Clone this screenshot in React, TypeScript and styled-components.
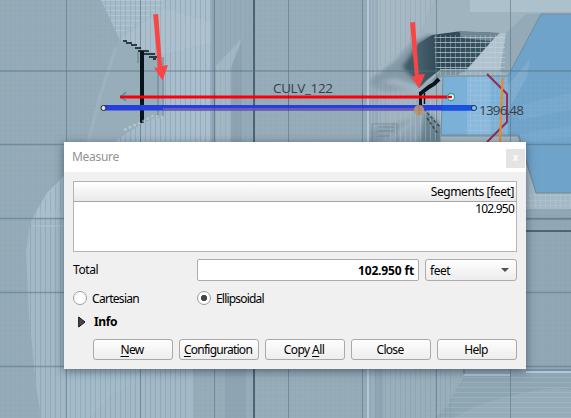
import React from "react";
import styled, { createGlobalStyle } from "styled-components";

const GlobalStyle = createGlobalStyle`
  *, *::before, *::after { box-sizing: border-box; }
  body { margin: 0; overflow: hidden; }
`;

const uiFont = `"Noto Sans", "Open Sans", sans-serif`;

const Screen = styled.main`
  position: relative;
  width: 571px;
  height: 418px;
  overflow: hidden;
  background: #93a9b7;
`;

const MapCanvas = styled.svg`
  display: block;
  width: 571px;
  height: 418px;
`;

const MapLabel = styled.text`
  font-family: "Open Sans", sans-serif;
  font-size: 13.5px;
  fill: #363f47;
`;

const Dialog = styled.section`
  position: absolute;
  left: 64px;
  top: 142px;
  width: 462px;
  height: 227px;
  background: #f0f0f0;
  box-shadow: 0 2px 9px rgba(20, 35, 50, 0.55);
  font-family: ${uiFont};
  font-size: 12px;
  line-height: 16px;
  color: #000;
`;

const TitleBar = styled.header`
  display: flex;
  justify-content: space-between;
  height: 30px;
  padding: 7px 1px 0 8px;
  background: #fff;
  color: #929292;
`;

const CloseButton = styled.button`
  width: 19px;
  height: 19px;
  padding: 0 0 3px;
  border: 0;
  background: #e4e4e4;
  color: #fafafa;
  font: bold 10px/16px ${uiFont};
`;

const Content = styled.div`
  display: flex;
  flex-direction: column;
  padding: 9px 9px 0;
`;

const Table = styled.div`
  height: 71px;
  border: 1px solid #b4b4b4;
  background: #fff;
  text-align: right;
`;

const HeaderCell = styled.div`
  height: 20px;
  padding: 2px 2px 0 0;
  border-bottom: 1px solid #a6a6a6;
  background: linear-gradient(#fff, #e9e9e9);
`;

const ValueCell = styled.div`
  height: 15px;
  padding-right: 2px;
  line-height: 14px;
`;

const Tracked = styled.span<{ $s?: number }>`
  letter-spacing: ${(p) => p.$s ?? -0.4}px;
  white-space: nowrap;
`;

const TotalRow = styled.div`
  display: grid;
  grid-template-columns: 118px 222px 92px;
  column-gap: 6px;
  height: 22px;
  margin-top: 7px;
  align-items: center;
`;

const TotalField = styled.div`
  height: 22px;
  padding: 3px 4px 0 0;
  border: 1px solid #acacac;
  border-radius: 2px;
  background: #fff;
  font-weight: 700;
  text-align: right;
`;

const UnitSelect = styled.div`
  display: flex;
  justify-content: space-between;
  height: 22px;
  padding: 3px 7px 0 4px;
  border: 1px solid #acacac;
  border-radius: 3px;
  background: linear-gradient(#fefefe, #ededed);
`;

const SelectArrow = styled.svg`
  width: 8px;
  height: 14px;
`;

const RadioRow = styled.div`
  display: grid;
  grid-template-columns: 124px 1fr;
  height: 16px;
  margin-top: 10px;
`;

const RadioOption = styled.label`
  display: flex;
  align-items: center;
  gap: 5px;
`;

const RadioMark = styled.span<{ $checked?: boolean }>`
  width: 14px;
  height: 14px;
  margin-top: -2px;
  border: 1px solid #9d9d9d;
  border-radius: 50%;
  background: ${(p) =>
    p.$checked ? "radial-gradient(circle, #454545 2.8px, #fff 3.5px)" : "#fff"};
`;

const InfoRow = styled.div`
  display: flex;
  align-items: center;
  gap: 8px;
  height: 16px;
  margin-top: 7px;
  padding-left: 5px;
  font-weight: 700;
`;

const ButtonRow = styled.div`
  display: flex;
  justify-content: flex-end;
  gap: 6px;
  margin-top: 9px;
`;

const PushButton = styled.button`
  width: 80px;
  height: 21px;
  padding: 1px 2px 0 0;
  border: 1px solid #a9a9a9;
  border-radius: 3px;
  background: linear-gradient(#fefefe, #ededed);
  color: #000;
  font: 12px/16px ${uiFont};
`;

const Accel = styled.span`
  text-decoration: underline;
  text-underline-offset: 2px;
  text-decoration-skip-ink: none;
`;

const verticals = [66.5, 140.5, 214.5, 288.5, 362.5, 436.5, 510.5];
const horizontals = [71, 144.5, 218.5, 292.5, 366.5];

function TerrainMap() {
  return (
    <MapCanvas viewBox="0 0 571 418">
      <defs>
        <pattern id="fineColumns" width="5" height="5" patternUnits="userSpaceOnUse">
          <path d="M.5 0V5" stroke="#6d8799" strokeOpacity=".5" />
        </pattern>
        <pattern id="lightColumns" width="5" height="5" patternUnits="userSpaceOnUse">
          <path d="M.5 0V5" stroke="#bccfdb" strokeOpacity=".6" />
        </pattern>
        <pattern id="fineRows" width="5" height="5" patternUnits="userSpaceOnUse">
          <path d="M0 2.5H5" stroke="#c2d2dc" strokeOpacity=".7" />
        </pattern>
        <pattern id="mesh" width="5" height="5" patternUnits="userSpaceOnUse">
          <path d="M0 .5H5M.5 0V5" stroke="#c0d3df" strokeOpacity=".5" />
        </pattern>
        <pattern id="faintMesh" width="5" height="5" patternUnits="userSpaceOnUse">
          <path d="M0 .5H5M.5 0V5" stroke="#6d8999" strokeOpacity=".08" />
        </pattern>
        <linearGradient id="plain" x1="0" x2="1">
          <stop offset="0" stopColor="#95abb9" />
          <stop offset=".5" stopColor="#98adba" />
          <stop offset="1" stopColor="#91a7b5" />
        </linearGradient>
        <linearGradient id="bank" x1="0" x2="1">
          <stop offset="0" stopColor="#a5bac8" />
          <stop offset="1" stopColor="#abc0ce" />
        </linearGradient>
        <linearGradient id="pit" x1="0" x2="1">
          <stop offset="0" stopColor="#4c6572" />
          <stop offset=".3" stopColor="#2f4855" />
          <stop offset="1" stopColor="#3e5866" />
        </linearGradient>
        <filter id="soft" x="-20%" y="-20%" width="140%" height="140%">
          <feGaussianBlur stdDeviation="2" />
        </filter>
        <filter id="edge" x="-20%" y="-20%" width="140%" height="140%">
          <feGaussianBlur stdDeviation=".6" />
        </filter>
      </defs>

      <rect width="571" height="418" fill="url(#plain)" />
      <rect width="571" height="418" fill="url(#faintMesh)" />

      <path d="M101 0L120 40L141 50L161 55V115L141 124L112 143H212V0Z" fill="url(#bank)" />
      <path d="M101 0L120 40L141 50L161 55V115L141 124L112 143H212V0Z" fill="url(#fineColumns)" opacity=".7" />
      <path d="M101 0L118 36L163 7V0Z" fill="url(#mesh)" />
      <path d="M101 0L118 36L163 7V0Z" fill="url(#fineColumns)" opacity=".6" />
      <path d="M120 40L163 8L212 23V42L161 55Z" fill="#b6c9d5" opacity=".25" />
      <path d="M119 40L141 50L161 55V114L141 122L112 143H88L105 77Z" fill="#98adba" />
      <path d="M116 47L99 99L88 143" stroke="#a9bcc8" strokeWidth="3" opacity=".4" fill="none" />
      <path d="M212 0H254V143H212Z" fill="#96abb9" />
      <path d="M216 66L242 38L232 64L231 143H216Z" fill="#a5bac7" opacity=".75" />
      <path d="M231 68L242 42V143H231Z" fill="#879eac" opacity=".6" />
      <rect x="216" width="38" height="143" fill="url(#fineColumns)" opacity=".3" />
      <rect x="211" width="4" height="143" fill="#8299a8" opacity=".5" />

      <path d="M64 176L46 194L36 211L30 224L26 252L29 315L36 385L41 418H193V369H64Z" fill="#a3b9c8" />
      <path d="M64 176L46 194L36 211L30 224L26 252L29 315L36 385L41 418H190V369H64Z" fill="url(#fineColumns)" opacity=".7" />
      <path d="M64 176L46 194L34 218H64Z" fill="#b1c7d5" opacity=".45" />
      <path d="M64 176L37 211H64Z" fill="url(#fineColumns)" opacity=".4" />
      <path d="M32 226H64" stroke="#b0c4d1" strokeWidth="2" opacity=".5" />
      <path d="M64 369H165L113 394L89 418H64Z" fill="#b1c7d5" opacity=".15" />
      <rect x="225" y="369" width="21" height="49" fill="#849baa" opacity=".45" />

      <g>
        <rect x="368" width="66" height="144" fill="#a1b3bf" />
        <path d="M424 0H571V14H541L524 54L508 76H443V143H390L411 92L395 72Z" fill="#a0b4c0" />
        <rect x="470" width="101" height="12" fill="#adc1cd" />
        <path d="M371 0H434L412 50L371 78Z" fill="#a5b8c4" />
        <path d="M370 0V143H458L437 125L419 105L371 71L412 50L436 0Z" fill="url(#fineColumns)" opacity=".4" />
        <path d="M369 0V143M373 0V143M377 0V143" stroke="#7890a0" opacity=".6" />
        <g filter="url(#soft)">
          <path d="M368 83L398 58L412 42L430 34V72L414 84L396 78Z" fill="#718895" opacity=".6" />
          <path d="M402 67L418 44L432 35V70L420 86L411 76Z" fill="#3a535f" opacity=".9" />
          <path d="M388 83L417 95L414 124L386 143H420V98Z" fill="#8fa4b0" />
          <path d="M425 109L443 127L446 143H419Z" fill="#56717e" opacity=".75" />
          <path d="M376 79L408 90L384 92L370 86Z" fill="#768d99" opacity=".45" />
          <path d="M370 130Q400 122 416 117L384 143H370Z" fill="#6e8592" opacity=".4" />
        </g>
        <g filter="url(#edge)">
          <path d="M418 44L432 35L458 31.5L499 33L490 43L467 69L441 69L427 80L419 88L414 72Z" fill="url(#pit)" />
          <path d="M459 31L500 33L491 41L462 38Z" fill="#708793" />
          <path d="M441 70H466L458 75H445L431 82L422 91Z" fill="#8096a2" />
          <path d="M500 33H506L500 72H466L491 42Z" fill="#b1c4cf" opacity=".85" />
          <path d="M506 33L526 14H541L508 75L500 72Z" fill="#91a7b4" opacity=".8" />
        </g>
        <path d="M434 35H505V72H436Z" fill="url(#fineRows)" />
        <path d="M390 100H441V144H384ZM434 35H505V76H436Z" fill="url(#lightColumns)" opacity=".65" />
        <path d="M372 124H397V144H372ZM378 127H394M378 131H394M378 136H390" fill="none" stroke="#506b7a" strokeOpacity=".4" />
      </g>

      <path d="M541 14L508 76L506 136H518L536 193H571V14Z" fill="#6fa3c9" />
      <path d="M443 76H508V136H441Z" fill="#7bb0d7" />
      <path d="M467 76H490V136H467Z" fill="#91bee0" opacity=".7" />
      <path d="M508 108L571 93V110L520 120ZM508 136L571 126V137L508 144Z" fill="#91bbda" opacity=".22" />
      <path d="M507 86L530 59L527 77L507 112Z" fill="#9fc5df" opacity=".3" />
      <rect x="467" y="76" width="40" height="60" fill="url(#mesh)" opacity=".35" />
      <rect x="508" y="76" width="63" height="66" fill="url(#mesh)" opacity=".12" />
      <path d="M571 14H541L508 76H443L441 135H519L536 193H571" fill="none" stroke="#708c9d" />
      <path d="M441 136H518L521 143H441Z" fill="#a5b8c4" />
      <path d="M520 142L536 193H571V209H526V142Z" fill="#a4b8c5" />
      <path d="M441 136H518L536 193H571" fill="none" stroke="#748d9b" />
      <path d="M526 194H571V209H526Z" fill="url(#mesh)" opacity=".5" />

      <path d="M464 370V418H438L449 403Z" fill="#9cafb9" />
      <path d="M464 376H571V418H437L450 400Z" fill="#8ea5b2" />
      <path d="M464 376H571V418H437L450 400Z" fill="url(#fineRows)" opacity=".35" />
      <path d="M454 418Q485 397 555 388L571 390V418Z" fill="#a8bdca" opacity=".3" />
      <path d="M371 369H463L449 404L436 418H371Z" fill="#a1b6c3" opacity=".4" />
      <rect x="371" y="369" width="80" height="49" fill="url(#fineColumns)" opacity=".4" />
      <path d="M379 369V418" stroke="#778f9f" strokeWidth="8" opacity=".25" />

      <path d="M254 0V418M526 231H571" stroke="#4c6575" strokeWidth="2" />
      <path d="M368 0V418M464 375H510M526 372H571" stroke="#b0c8d7" strokeWidth="2" />
      <path d="M526 219H571M526 370H571M464 369V374" stroke="#607c8b" />
      {verticals.map((x) => (
        <path key={x} d={`M${x} 0V418`} stroke="#526f81" strokeOpacity=".55" />
      ))}
      {horizontals.map((y) => (
        <path key={y} d={`M0 ${y}H571`} stroke="#526f81" strokeWidth="1.3" strokeOpacity=".5" />
      ))}

      <g fill="none" stroke="#06151d">
        <path d="M142 51V123" strokeWidth="4" />
        <path d="M123 41H127M126 43H132M131 45H137M135 48H141M138 51H149M143 54H155M149 57H157M153 59H156" strokeWidth="1.6" />
        <path d="M138 52V63" stroke="#627c8b" />
        <path d="M158 57V118M163 57V118" stroke="#738b99" strokeWidth="1.3" />
        <path d="M160.5 57V118" stroke="#9cacb7" strokeWidth="3" opacity=".8" />
        <path d="M420.5 92V111" strokeWidth="3" />
        <path d="M424.5 93V104" strokeWidth="1.5" />
        <path d="M420 94L425 90L429 87L434 84L439 79" strokeWidth="4" />
        <path d="M424 109L430 116L440 127M427 118L438 134" strokeWidth="1.5" strokeDasharray="3 2" opacity=".55" />
        <path d="M124 130L142 122L153 116L164 117" stroke="#c6d3d9" strokeWidth="2.5" strokeDasharray="3 2" opacity=".6" />
      </g>

      <path d="M104 107.8H474" stroke="#263fde" strokeWidth="5.5" />
      <path d="M163 109.3H419" stroke="#735fb0" strokeWidth="2.5" opacity=".9" />
      <path d="M442 108H474" stroke="#1752e2" strokeWidth="5" />
      <path d="M126 92L121 97L126 101" fill="none" stroke="#21a5a3" strokeWidth="1.5" />
      <path d="M120 97H450" stroke="#fb0009" strokeWidth="3" />
      <path d="M140.5 93V111M214.5 93V111M288.5 93V111M362.5 93V111M254 104V111" stroke="#17284b" strokeOpacity=".2" />
      <circle cx="451" cy="97" r="3.5" fill="#fff" stroke="#20aaa0" strokeWidth="1.3" />
      <path d="M448 97H452" stroke="#fb0009" strokeWidth="2.5" />
      <circle cx="103.5" cy="108" r="2.5" fill="#dae8ee" stroke="#192b35" />
      <circle cx="474" cy="108" r="2.6" fill="#81b9e8" stroke="#173b5b" />
      <circle cx="419" cy="110" r="5.2" fill="#bd936d" opacity=".9" />
      <path d="M419 105V115" stroke="#896a61" opacity=".5" />
      <path d="M487 74L507 94V122L487 142" fill="none" stroke="#942c53" strokeWidth="2" />
      <path d="M502.5 78L500 142" stroke="#f28720" strokeWidth="2.2" />
      <g fill="#fa4545">
        <path d="M153.2 14.5L158.1 14L162.1 66L168 65L162.5 80.5L154 67.5L158 68Z" />
        <path d="M410 22.5L415 22L418.7 74.5L425 74L419 88.5L411 76L415 76.5Z" />
      </g>
      <MapLabel x="273" y="93" textLength="60">CULV_122</MapLabel>
      <MapLabel x="479" y="115" textLength="45">1396.48</MapLabel>
    </MapCanvas>
  );
}

export default function App() {
  return (
    <>
      <GlobalStyle />
      <Screen>
        <TerrainMap />
        <Dialog aria-label="Measure">
          <TitleBar>
            <Tracked $s={-0.3}>Measure</Tracked>
            <CloseButton aria-label="Close window">x</CloseButton>
          </TitleBar>
          <Content>
            <Table>
              <HeaderCell><Tracked>Segments [feet]</Tracked></HeaderCell>
              <ValueCell><Tracked $s={-0.8}>102.950</Tracked></ValueCell>
            </Table>
            <TotalRow>
              <Tracked>Total</Tracked>
              <TotalField><Tracked $s={-0.15}>102.950 ft</Tracked></TotalField>
              <UnitSelect>
                <Tracked $s={-0.5}>feet</Tracked>
                <SelectArrow viewBox="0 0 8 14" aria-hidden="true">
                  <path d="M0 5H8L4 9Z" fill="#505050" />
                </SelectArrow>
              </UnitSelect>
            </TotalRow>
            <RadioRow>
              <RadioOption><RadioMark /><Tracked $s={-0.7}>Cartesian</Tracked></RadioOption>
              <RadioOption><RadioMark $checked /><Tracked $s={-0.8}>Ellipsoidal</Tracked></RadioOption>
            </RadioRow>
            <InfoRow>
              <svg width="8" height="12" viewBox="0 0 8 12" aria-hidden="true">
                <path d="M.7 1L7 6L.7 11Z" fill="#4a4a4a" stroke="#111" />
              </svg>
              <Tracked $s={-0.4}>Info</Tracked>
            </InfoRow>
            <ButtonRow>
              <PushButton><Tracked $s={-0.7}><Accel>N</Accel>ew</Tracked></PushButton>
              <PushButton><Tracked $s={-0.75}><Accel>C</Accel>onfiguration</Tracked></PushButton>
              <PushButton><Tracked $s={-0.6}>Copy <Accel>A</Accel>ll</Tracked></PushButton>
              <PushButton><Tracked $s={-0.7}>Close</Tracked></PushButton>
              <PushButton><Tracked $s={-0.7}>Help</Tracked></PushButton>
            </ButtonRow>
          </Content>
        </Dialog>
      </Screen>
    </>
  );
}
